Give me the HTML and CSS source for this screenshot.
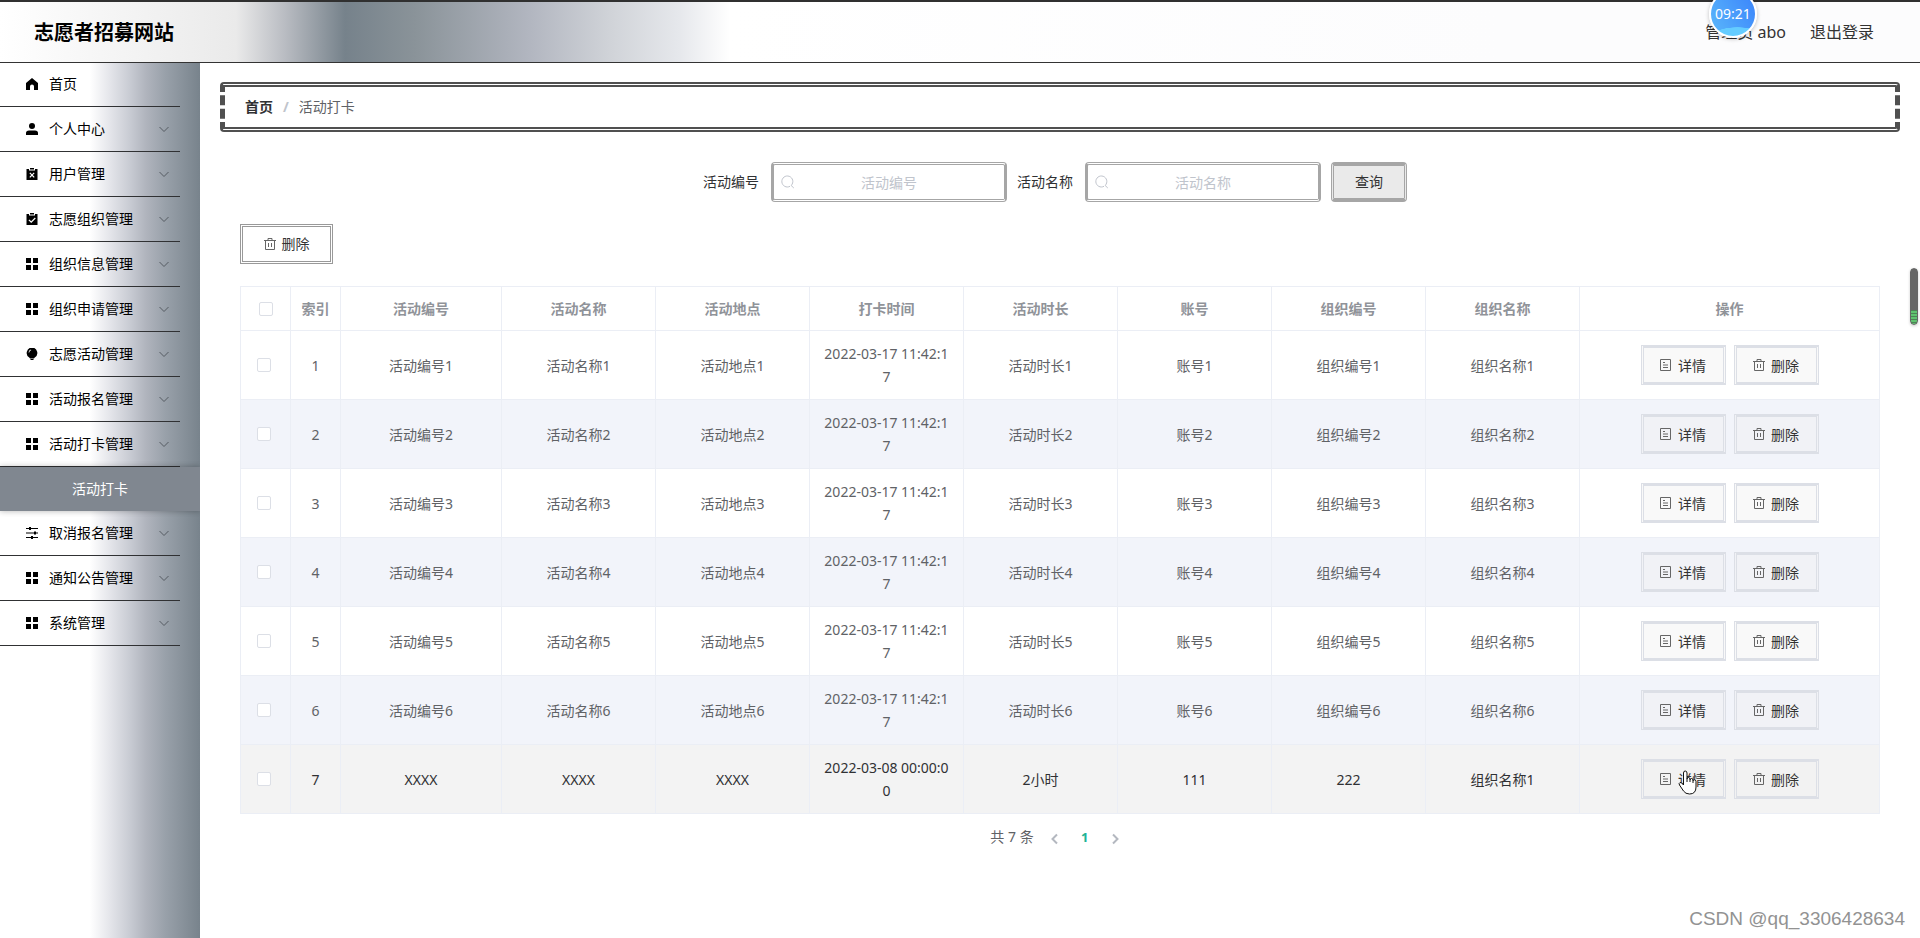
FILE: index.html
```html
<!DOCTYPE html>
<html lang="zh-CN">
<head>
<meta charset="utf-8">
<title>志愿者招募网站</title>
<link rel="stylesheet" href="styles.css">
</head>
<body>
<svg class="sprite" aria-hidden="true">
  <symbol id="home" viewBox="0 0 12 12"><path d="M6 0 12 5V12H8V8.500A2 2 0 0 0 4 8.500V12H0V5Z"/></symbol>
  <symbol id="user" viewBox="0 0 12 12"><circle cx="6" cy="3" r="3"/><path d="M0 12V10Q0 7.500 3 7.500H9Q12 7.500 12 10V12Z"/></symbol>
  <symbol id="board-x" viewBox="0 0 12 12"><path fill-rule="evenodd" d="M0.500 1H3V2.500H9V1H11.500V12H0.500ZM4.200 4.500 3.400 5.300 5.200 7.100 3.400 8.900 4.200 9.700 6 7.900 7.800 9.700 8.600 8.900 6.800 7.100 8.600 5.300 7.800 4.500 6 6.300Z"/><path d="M4 0H8V1.500H4Z"/></symbol>
  <symbol id="board-ok" viewBox="0 0 12 12"><path fill-rule="evenodd" d="M0.500 1H3V2.500H9V1H11.500V12H0.500ZM3.300 6.500 2.500 7.300 5.200 9.900 9.700 5.400 8.900 4.600 5.200 8.300Z"/><path d="M4 0H8V1.500H4Z"/></symbol>
  <symbol id="grid" viewBox="0 0 12 12"><path d="M0 0H5V5H0ZM7 0H12V5H7ZM0 7H5V12H0ZM7 7H12V12H7Z"/></symbol>
  <symbol id="bulb" viewBox="0 0 12 12"><path fill-rule="evenodd" d="M6 -0.500A5.500 5.500 0 0 1 8.500 9.800L8 10.500H4L3.500 9.800A5.500 5.500 0 0 1 6 -0.500ZM5 1.500A3.500 3.500 0 0 0 2.500 4.500L3.300 4.600A2.800 2.800 0 0 1 5.200 2.300Z"/><path d="M4.500 11H7.500V12.500H4.500Z"/></symbol>
  <symbol id="sliders" viewBox="0 0 12 12"><path d="M0 1H12V2H0ZM0 5.500H12V6.500H0ZM0 10H12V11H0ZM3 0H5V3H3ZM8 4.500H10V7.500H8ZM5 9H7V12H5Z"/></symbol>
  <symbol id="down" viewBox="0 0 12 12"><path d="M1.500 4 6 8.500 10.500 4" fill="none" stroke="currentColor"/></symbol>
  <symbol id="search" viewBox="0 0 14 14"><path d="M10.300 10.300A5.500 5.500 0 1 0 9 11.300M10 10.300 12.800 13" fill="none" stroke="currentColor"/></symbol>
  <symbol id="trash" viewBox="0 0 12 12"><path d="M0 2.500H12M1.500 2.500V11.500H10.500V2.500M4 2.500V0.500H8V2.500M4.500 5V9M7.500 5V9" fill="none" stroke="currentColor"/></symbol>
  <symbol id="doc" viewBox="0 0 12 12"><path d="M0.500 0.500H10.500V11.500H0.500ZM3 3.500H5M3 6H8M3 8.500H8" fill="none" stroke="currentColor"/></symbol>
</svg>

<header class="topbar">
  <h1 class="brand">志愿者招募网站</h1>
  <div class="account"><span>管理员 abo</span><a class="logout" href="#">退出登录</a></div>
</header>

<div class="layout">
  <nav class="sidebar">
    <ul class="menu">
      <li><a class="item" href="#"><svg class="icon"><use href="#home"/></svg>首页</a></li>
      <li><a class="item" href="#"><svg class="icon"><use href="#user"/></svg>个人中心<svg class="arrow"><use href="#down"/></svg></a></li>
      <li><a class="item" href="#"><svg class="icon"><use href="#board-x"/></svg>用户管理<svg class="arrow"><use href="#down"/></svg></a></li>
      <li><a class="item" href="#"><svg class="icon"><use href="#board-ok"/></svg>志愿组织管理<svg class="arrow"><use href="#down"/></svg></a></li>
      <li><a class="item" href="#"><svg class="icon"><use href="#grid"/></svg>组织信息管理<svg class="arrow"><use href="#down"/></svg></a></li>
      <li><a class="item" href="#"><svg class="icon"><use href="#grid"/></svg>组织申请管理<svg class="arrow"><use href="#down"/></svg></a></li>
      <li><a class="item" href="#"><svg class="icon"><use href="#bulb"/></svg>志愿活动管理<svg class="arrow"><use href="#down"/></svg></a></li>
      <li><a class="item" href="#"><svg class="icon"><use href="#grid"/></svg>活动报名管理<svg class="arrow"><use href="#down"/></svg></a></li>
      <li><a class="item" href="#"><svg class="icon"><use href="#grid"/></svg>活动打卡管理<svg class="arrow"><use href="#down"/></svg></a>
        <a class="subitem" href="#">活动打卡</a></li>
      <li><a class="item" href="#"><svg class="icon"><use href="#sliders"/></svg>取消报名管理<svg class="arrow"><use href="#down"/></svg></a></li>
      <li><a class="item" href="#"><svg class="icon"><use href="#grid"/></svg>通知公告管理<svg class="arrow"><use href="#down"/></svg></a></li>
      <li><a class="item" href="#"><svg class="icon"><use href="#grid"/></svg>系统管理<svg class="arrow"><use href="#down"/></svg></a></li>
    </ul>
  </nav>

  <main class="main">
    <div class="crumbs"><a class="crumb-home" href="#">首页</a><span class="slash">/</span><span>活动打卡</span></div>

    <div class="content">
      <form class="filters">
        <label for="code">活动编号</label>
        <div class="field"><svg class="field-icon"><use href="#search"/></svg><input id="code" type="text" placeholder="活动编号"></div>
        <label for="name">活动名称</label>
        <div class="field"><svg class="field-icon"><use href="#search"/></svg><input id="name" type="text" placeholder="活动名称"></div>
        <button class="query" type="button">查询</button>
      </form>

      <button class="bulk" type="button"><svg class="glyph"><use href="#trash"/></svg>删除</button>

      <table class="records">
        <colgroup><col class="c-slim"><col class="c-slim"><col class="c-code"><col><col><col><col><col><col><col><col class="c-ops"></colgroup>
        <thead>
          <tr><th><input type="checkbox" aria-label="全选"></th><th>索引</th><th>活动编号</th><th>活动名称</th><th>活动地点</th><th>打卡时间</th><th>活动时长</th><th>账号</th><th>组织编号</th><th>组织名称</th><th>操作</th></tr>
        </thead>
        <tbody>
          <tr><td class="pick"><input type="checkbox" aria-label="选择 1"></td><td>1</td><td>活动编号1</td><td>活动名称1</td><td>活动地点1</td><td>2022-03-17 11:42:17</td><td>活动时长1</td><td>账号1</td><td>组织编号1</td><td>组织名称1</td><td><div class="ops"><button type="button"><svg class="glyph"><use href="#doc"/></svg>详情</button><button type="button"><svg class="glyph"><use href="#trash"/></svg>删除</button></div></td></tr>
          <tr><td class="pick"><input type="checkbox" aria-label="选择 2"></td><td>2</td><td>活动编号2</td><td>活动名称2</td><td>活动地点2</td><td>2022-03-17 11:42:17</td><td>活动时长2</td><td>账号2</td><td>组织编号2</td><td>组织名称2</td><td><div class="ops"><button type="button"><svg class="glyph"><use href="#doc"/></svg>详情</button><button type="button"><svg class="glyph"><use href="#trash"/></svg>删除</button></div></td></tr>
          <tr><td class="pick"><input type="checkbox" aria-label="选择 3"></td><td>3</td><td>活动编号3</td><td>活动名称3</td><td>活动地点3</td><td>2022-03-17 11:42:17</td><td>活动时长3</td><td>账号3</td><td>组织编号3</td><td>组织名称3</td><td><div class="ops"><button type="button"><svg class="glyph"><use href="#doc"/></svg>详情</button><button type="button"><svg class="glyph"><use href="#trash"/></svg>删除</button></div></td></tr>
          <tr><td class="pick"><input type="checkbox" aria-label="选择 4"></td><td>4</td><td>活动编号4</td><td>活动名称4</td><td>活动地点4</td><td>2022-03-17 11:42:17</td><td>活动时长4</td><td>账号4</td><td>组织编号4</td><td>组织名称4</td><td><div class="ops"><button type="button"><svg class="glyph"><use href="#doc"/></svg>详情</button><button type="button"><svg class="glyph"><use href="#trash"/></svg>删除</button></div></td></tr>
          <tr><td class="pick"><input type="checkbox" aria-label="选择 5"></td><td>5</td><td>活动编号5</td><td>活动名称5</td><td>活动地点5</td><td>2022-03-17 11:42:17</td><td>活动时长5</td><td>账号5</td><td>组织编号5</td><td>组织名称5</td><td><div class="ops"><button type="button"><svg class="glyph"><use href="#doc"/></svg>详情</button><button type="button"><svg class="glyph"><use href="#trash"/></svg>删除</button></div></td></tr>
          <tr><td class="pick"><input type="checkbox" aria-label="选择 6"></td><td>6</td><td>活动编号6</td><td>活动名称6</td><td>活动地点6</td><td>2022-03-17 11:42:17</td><td>活动时长6</td><td>账号6</td><td>组织编号6</td><td>组织名称6</td><td><div class="ops"><button type="button"><svg class="glyph"><use href="#doc"/></svg>详情</button><button type="button"><svg class="glyph"><use href="#trash"/></svg>删除</button></div></td></tr>
          <tr class="active"><td class="pick"><input type="checkbox" aria-label="选择 7"></td><td>7</td><td>XXXX</td><td>XXXX</td><td>XXXX</td><td>2022-03-08 00:00:00</td><td>2小时</td><td>111</td><td>222</td><td>组织名称1</td><td><div class="ops"><button type="button"><svg class="glyph"><use href="#doc"/></svg>详情<svg class="pointer" viewBox="0 0 20 25"><path d="M5.500 15V3Q5.500 1 7.200 1T9 3V9Q9.200 7.500 10.500 7.500T12 9V10Q12.200 8.500 13.500 8.500T15 10V11Q15.200 9.800 16.500 9.800T18 11.500V17Q18 24 11.500 24Q7.500 24 5.500 21L1.500 15Q0.500 13 2 12.500T5.500 15ZM9 9V12M12 10V12M15 11V13" fill="#fff" stroke="#111"/></svg></button><button type="button"><svg class="glyph"><use href="#trash"/></svg>删除</button></div></td></tr>
        </tbody>
      </table>

      <div class="pager"><span>共 7 条</span>
        <button type="button" aria-label="上一页"><svg viewBox="0 0 12 12"><path d="M8 1.500 3.500 6 8 10.500"/></svg></button>
        <button class="current" type="button">1</button>
        <button type="button" aria-label="下一页"><svg viewBox="0 0 12 12"><path d="M4 1.500 8.500 6 4 10.500"/></svg></button>
      </div>
    </div>
  </main>
</div>

<div class="clock">09:21</div>
<div class="meter"></div>
<div class="watermark">CSDN @qq_3306428634</div>
</body>
</html>
```
FILE: styles.css
```css
* { box-sizing: border-box; }
body {
  margin: 0;
  min-height: 100vh;
  display: flex;
  flex-direction: column;
  position: relative;
  overflow: hidden;
  background: #fff;
  color: #606266;
  font: 14px/20px "Noto Sans", "Noto Sans CJK SC", sans-serif;
}
a { color: inherit; text-decoration: none; }
button, input { font: inherit; color: inherit; margin: 0; }
svg { fill: currentColor; flex: none; }
.sprite { position: absolute; width: 0; height: 0; }

.topbar {
  display: flex;
  align-items: center;
  justify-content: space-between;
  height: 63px;
  padding: 0 46px 0 34px;
  border-top: 2px solid #303030;
  border-bottom: 1px solid #333;
  background: linear-gradient(90deg, #fff 0, #eaeaea 236px, #b9bcc2 285px, #76828b 345px, #8a9399 415px, #b2b6c0 530px, #d0d3d8 610px, #e6e8ec 680px, #fff 730px, #fcfcfd 1500px);
}
.brand { margin: 0; padding-top: 2px; color: #000; font-size: 20px; line-height: 28px; }
.account { display: flex; gap: 24px; color: #333; font-size: 16px; line-height: 24px; }

.layout { display: flex; flex: 1; }
.sidebar {
  width: 200px;
  flex: none;
  background: linear-gradient(90deg, #fff 45%, #e4e5ea 55%, #c8cbd3 65%, #b0b4bd 73%, #98a0a9 83%, #78838c 100%);
}
.menu { margin: 0; padding: 0; list-style: none; color: #000; }
.item {
  display: flex;
  align-items: center;
  gap: 11px;
  width: 180px;
  height: 45px;
  padding: 0 10px 0 26px;
  border-bottom: 1px solid #303133;
}
.menu li:first-child .item { height: 44px; padding-bottom: 2px; }
.icon { width: 12px; height: 12px; overflow: visible; }
.arrow { width: 12px; height: 12px; margin-left: auto; color: #555b62; }
.subitem {
  display: block;
  height: 44px;
  line-height: 44px;
  text-align: center;
  color: #fff;
  background: #808790;
  box-shadow: 0 0 6px rgba(0, 0, 0, .3);
  clip-path: inset(-6px 0);
}

.main { flex: 1; min-width: 0; padding: 19px 20px; }
.crumbs {
  display: flex;
  align-items: center;
  height: 50px;
  padding: 0 20px;
  border: 5px dashed #505050;
  border-top-style: double;
  border-bottom-style: double;
  border-radius: 4px;
}
.crumb-home { color: #303133; font-weight: 700; }
.slash { margin: 0 10px; color: #c0c4cc; font-weight: 700; }

.content { padding: 30px 20px 0; }
.filters {
  display: flex;
  align-items: center;
  justify-content: center;
  padding-right: 10px;
  color: #303133;
}
.field { position: relative; width: 236px; margin: 0 10px 0 12px; }
.field-icon { position: absolute; left: 10px; top: 13px; width: 14px; height: 14px; color: #c0c4cc; }
.field input {
  display: block;
  width: 100%;
  height: 40px;
  padding: 0 30px;
  text-align: center;
  border: 3px solid #a6a6a6;
  border-top-style: double;
  border-bottom-style: double;
  border-radius: 4px;
  background: none;
  outline: none;
}
.field input::placeholder { color: #c0c4cc; }
.query {
  width: 76px;
  height: 40px;
  padding: 0;
  color: #333;
  background: #eaeaea;
  border: 3px double #a6a6a6;
  border-width: 4px 3px;
  border-top-style: solid;
  border-bottom-style: solid;
  border-radius: 4px;
}
.bulk {
  display: flex;
  align-items: center;
  justify-content: center;
  gap: 6px;
  width: 93px;
  height: 40px;
  margin: 22px 0;
  padding: 0;
  color: #333;
  background: #fff;
  border: 3px double #999;
}
.glyph { width: 12px; height: 12px; color: #666; overflow: visible; }

.records { width: 100%; border-collapse: collapse; table-layout: fixed; }
.c-slim { width: 50px; }
.c-code { width: 161px; }
.c-ops { width: 300px; }
.records th, .records td {
  padding: 0 11px;
  border: 1px solid #ebeef5;
  text-align: center;
  line-height: 23px;
  word-break: break-all;
}
.records th { height: 44px; padding: 0; color: #909399; font-weight: 700; }
.records td { height: 69px; }
.records tbody tr:nth-child(even) { background: #f2f4fa; }
.records .active { background: #f3f3f3; color: #303133; }
.records .pick { padding: 0 14px 0 10px; }
.records input {
  appearance: none;
  display: block;
  width: 14px;
  height: 14px;
  margin: 0 auto;
  border: 1px solid #dcdfe6;
  border-radius: 2px;
  background: #fff;
}
.ops { display: flex; justify-content: center; gap: 8px; }
.ops button {
  position: relative;
  display: flex;
  align-items: center;
  justify-content: center;
  gap: 6px;
  width: 85px;
  height: 40px;
  padding: 0;
  color: #333;
  background: rgba(240, 240, 240, .4);
  border: 3px double #dcdfe6;
  border-top-style: solid;
  border-bottom-style: solid;
}
.pointer { position: absolute; left: 34px; top: 8px; width: 20px; height: 25px; }

.pager { display: flex; align-items: center; justify-content: center; padding-top: 9px; line-height: 28px; }
.pager span { margin-right: 6px; }
.pager button { width: 30px; height: 28px; padding: 0; border: 0; background: none; color: #b4b8c0; font-size: 13px; line-height: 28px; }
.pager svg { width: 12px; height: 12px; vertical-align: middle; fill: none; stroke: currentColor; stroke-width: 2; }
.pager .current { color: #21b295; font-weight: 700; }

.clock {
  position: absolute;
  right: 163px;
  top: -10px;
  width: 48px;
  height: 48px;
  border: 2px solid #fff;
  border-radius: 50%;
  background: radial-gradient(ellipse 24px 8px at 60% 98%, #64ccff 95%, transparent), linear-gradient(60deg, #5bb8fb, #3a83fb);
  box-shadow: 0 1px 4px rgba(0, 0, 0, .25);
  color: #fff;
  line-height: 44px;
  text-align: center;
}
.meter {
  position: absolute;
  right: 2px;
  top: 268px;
  width: 8px;
  height: 57px;
  border: 1px solid #666;
  border-radius: 4px;
  background: linear-gradient(#666 41px, transparent 41px), repeating-linear-gradient(#5fc36f 0 2px, #4d8455 2px 3px);
  box-shadow: 0 1px 3px rgba(0, 0, 0, .2);
}
.watermark {
  position: absolute;
  right: 15px;
  bottom: 7px;
  color: #929292;
  font: 19px/24px "Liberation Sans", sans-serif;
}
```
